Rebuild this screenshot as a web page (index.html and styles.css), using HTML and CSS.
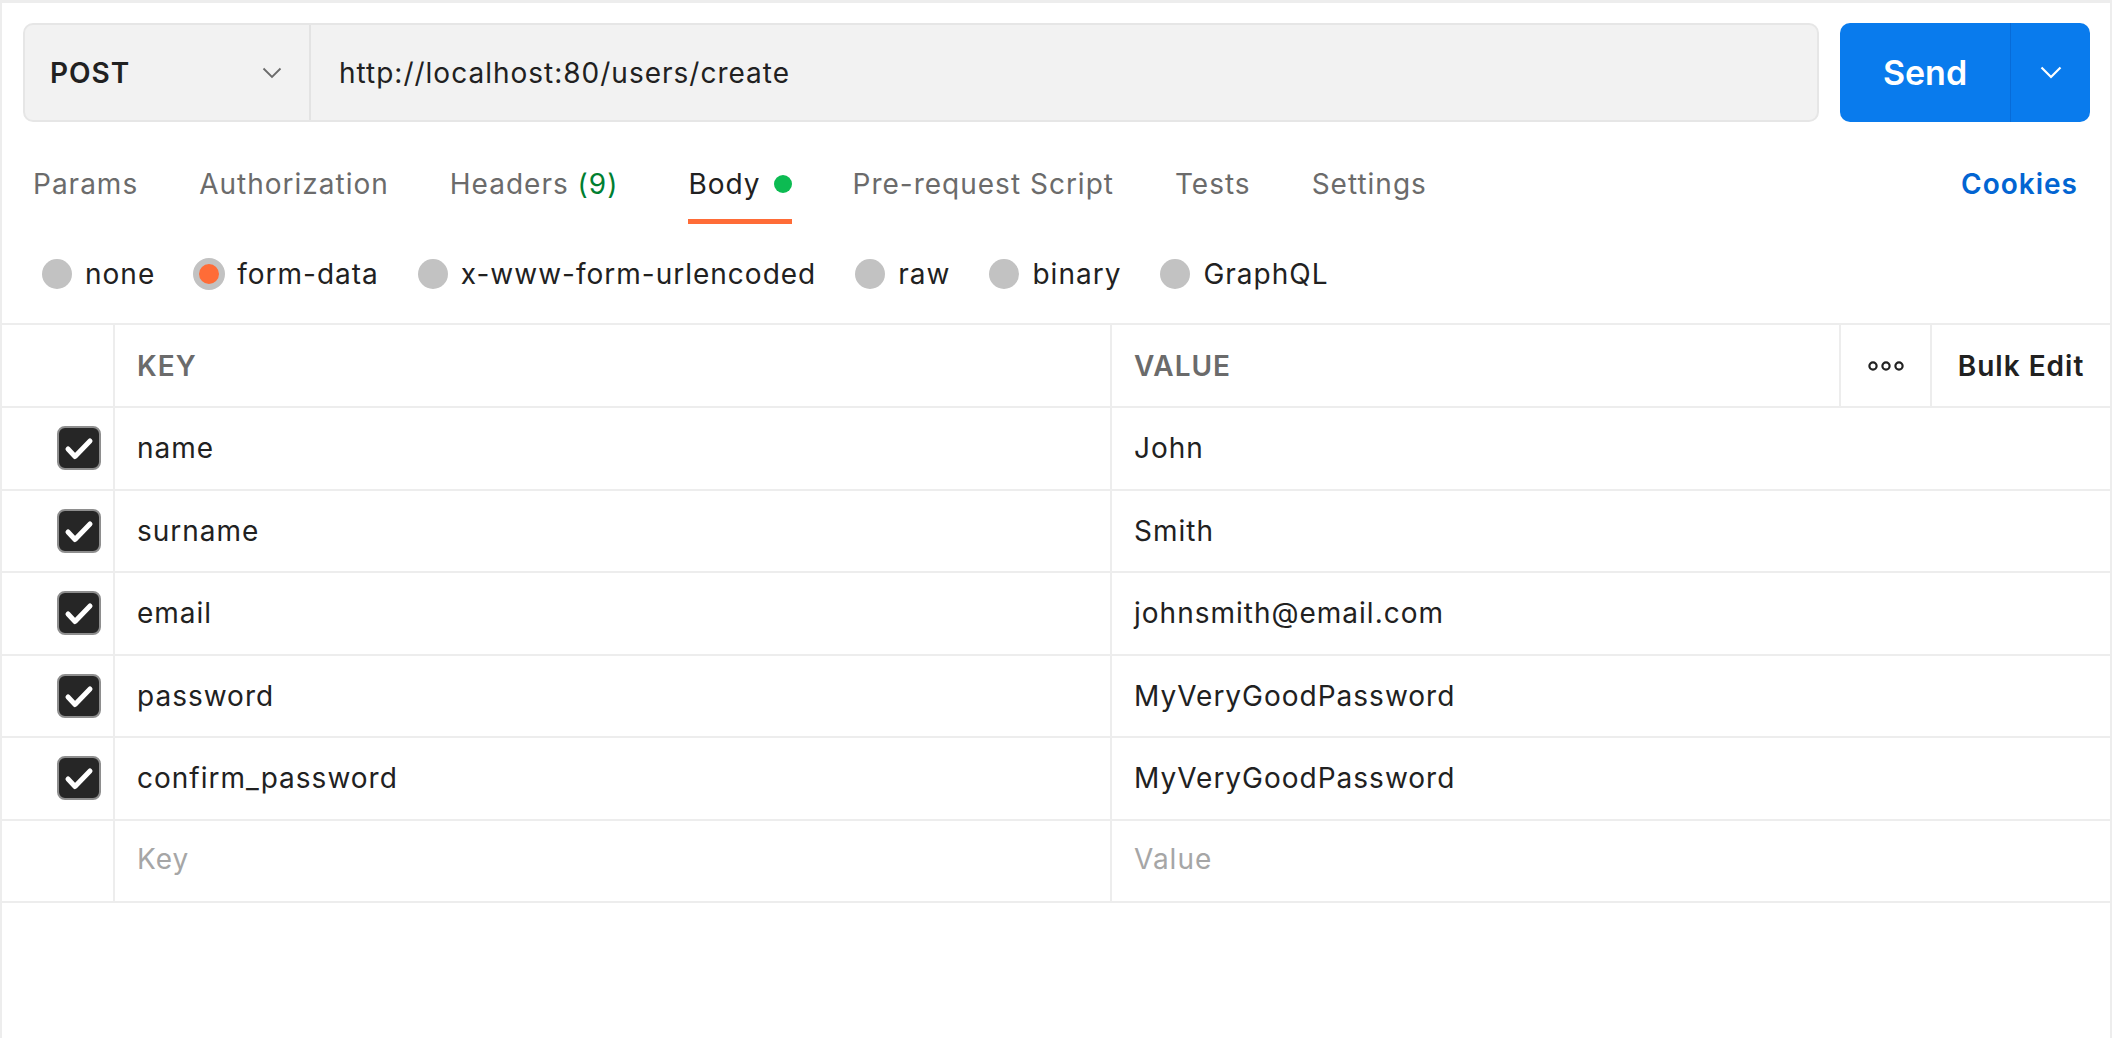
FILE: index.html
```html
<!DOCTYPE html>
<html lang="en">
<head>
<meta charset="utf-8">
<title>POST http://localhost:80/users/create</title>
<link rel="stylesheet" href="styles.css">
</head>
<body>
<div class="panel">
  <div class="request-bar">
    <div class="url-box">
      <div class="method">
        <span>POST</span>
        <svg class="chev" width="20" height="12" viewBox="0 0 20 12"><path d="M1.5 1.5 L10 10 L18.5 1.5" fill="none" stroke="#6b6b6b" stroke-width="1.8"/></svg>
      </div>
      <div class="url">http://localhost:80/users/create</div>
    </div>
    <div class="send">
      <span class="send-label">Send</span>
      <span class="send-more"><svg width="22" height="13" viewBox="0 0 22 13"><path d="M1.5 1.5 L11 11 L20.5 1.5" fill="none" stroke="#fff" stroke-width="2.2"/></svg></span>
    </div>
  </div>

  <div class="tabs">
    <div class="tab-list">
      <span class="tab">Params</span>
      <span class="tab">Authorization</span>
      <span class="tab">Headers <span class="count">(9)</span></span>
      <span class="tab active">Body<span class="dot"></span></span>
      <span class="tab">Pre-request Script</span>
      <span class="tab">Tests</span>
      <span class="tab">Settings</span>
    </div>
    <span class="cookies">Cookies</span>
  </div>

  <div class="body-types">
    <label class="radio"><span class="radio-dot"></span>none</label>
    <label class="radio"><span class="radio-dot on"></span>form-data</label>
    <label class="radio"><span class="radio-dot"></span>x-www-form-urlencoded</label>
    <label class="radio"><span class="radio-dot"></span>raw</label>
    <label class="radio"><span class="radio-dot"></span>binary</label>
    <label class="radio"><span class="radio-dot"></span>GraphQL</label>
  </div>

  <div class="kv-table">
    <div class="kv-row kv-head">
      <div class="cell check-cell"></div>
      <div class="cell head">KEY</div>
      <div class="cell head">VALUE</div>
      <div class="cell center"><svg width="36" height="10" viewBox="0 0 36 10"><circle cx="5" cy="5" r="3.6" fill="none" stroke="#212121" stroke-width="2.2"/><circle cx="18" cy="5" r="3.6" fill="none" stroke="#212121" stroke-width="2.2"/><circle cx="31" cy="5" r="3.6" fill="none" stroke="#212121" stroke-width="2.2"/></svg></div>
      <div class="cell center bulk">Bulk Edit</div>
    </div>
    <div class="kv-row">
      <div class="cell check-cell"><span class="checkbox"><svg width="40" height="40" viewBox="0 0 40 40"><path d="M9 21 L16 28.5 L31 13" fill="none" stroke="#fff" stroke-width="5" stroke-linecap="round" stroke-linejoin="round"/></svg></span></div>
      <div class="cell">name</div>
      <div class="cell">John</div>
    </div>
    <div class="kv-row">
      <div class="cell check-cell"><span class="checkbox"><svg width="40" height="40" viewBox="0 0 40 40"><path d="M9 21 L16 28.5 L31 13" fill="none" stroke="#fff" stroke-width="5" stroke-linecap="round" stroke-linejoin="round"/></svg></span></div>
      <div class="cell">surname</div>
      <div class="cell">Smith</div>
    </div>
    <div class="kv-row">
      <div class="cell check-cell"><span class="checkbox"><svg width="40" height="40" viewBox="0 0 40 40"><path d="M9 21 L16 28.5 L31 13" fill="none" stroke="#fff" stroke-width="5" stroke-linecap="round" stroke-linejoin="round"/></svg></span></div>
      <div class="cell">email</div>
      <div class="cell">johnsmith@email.com</div>
    </div>
    <div class="kv-row">
      <div class="cell check-cell"><span class="checkbox"><svg width="40" height="40" viewBox="0 0 40 40"><path d="M9 21 L16 28.5 L31 13" fill="none" stroke="#fff" stroke-width="5" stroke-linecap="round" stroke-linejoin="round"/></svg></span></div>
      <div class="cell">password</div>
      <div class="cell">MyVeryGoodPassword</div>
    </div>
    <div class="kv-row">
      <div class="cell check-cell"><span class="checkbox"><svg width="40" height="40" viewBox="0 0 40 40"><path d="M9 21 L16 28.5 L31 13" fill="none" stroke="#fff" stroke-width="5" stroke-linecap="round" stroke-linejoin="round"/></svg></span></div>
      <div class="cell">confirm_password</div>
      <div class="cell">MyVeryGoodPassword</div>
    </div>
    <div class="kv-row">
      <div class="cell check-cell"></div>
      <div class="cell placeholder">Key</div>
      <div class="cell placeholder">Value</div>
    </div>
  </div>
</div>
</body>
</html>
```

FILE: styles.css
```css
* { box-sizing: border-box; }

html, body {
  margin: 0;
  background: #ffffff;
}

body {
  font-family: Inter, "Noto Sans", "Liberation Sans", sans-serif;
  color: #212121;
  font-size: 28px;
  letter-spacing: 1px;
}

.panel {
  width: 2112px;
  height: 1038px;
  border-style: solid;
  border-color: #ededed;
  border-width: 3px 2px 0 2px;
  padding-top: 20px;
}

/* request bar */
.request-bar {
  display: flex;
  gap: 21px;
  height: 99px;
  padding: 0 20px 0 21px;
}

.url-box {
  flex: 1;
  display: flex;
  background: #f2f2f2;
  border: 2px solid #e6e6e6;
  border-radius: 10px;
}

.method {
  width: 286px;
  display: flex;
  align-items: center;
  justify-content: space-between;
  padding: 0 27px 0 25px;
  border-right: 2px solid #e3e3e3;
  font-weight: 600;
}

.url {
  display: flex;
  align-items: center;
  padding-left: 28px;
}

.send {
  width: 250px;
  display: flex;
  background: #097bed;
  border-radius: 10px;
  color: #ffffff;
}

.send-label {
  width: 170px;
  display: flex;
  align-items: center;
  justify-content: center;
  font-size: 34px;
  font-weight: 600;
  letter-spacing: 0;
}

.send-more {
  flex: 1;
  display: flex;
  align-items: center;
  justify-content: center;
  border-left: 1px solid rgba(0, 40, 120, 0.18);
}

/* tabs */
.tabs {
  display: flex;
  justify-content: space-between;
  align-items: flex-start;
  margin-top: 45px;
  padding: 0 32px 0 31px;
  line-height: 34px;
}

.tab-list {
  display: flex;
  gap: 61px;
}

.tab {
  display: flex;
  align-items: center;
  color: #6b6b6b;
  padding-bottom: 18px;
  border-bottom: 5px solid transparent;
  white-space: pre;
}

.tab.active {
  color: #212121;
  border-bottom-color: #ff6c37;
  margin-left: 9px;
}

.count { color: #007f31; }

.dot {
  width: 18px;
  height: 18px;
  border-radius: 50%;
  background: #0cbb52;
  margin-left: 13px;
}

.cookies {
  color: #0265d2;
  font-weight: 600;
}

/* body type radios */
.body-types {
  display: flex;
  gap: 39px;
  margin-top: 33px;
  padding-left: 40px;
  line-height: 34px;
}

.radio {
  display: flex;
  align-items: center;
  gap: 13px;
}

.radio-dot {
  width: 30px;
  height: 30px;
  border-radius: 50%;
  background: #c2c2c2;
}

.radio-dot.on {
  width: 32px;
  height: 32px;
  margin: 0 -1px;
  background: #ff6c37;
  border: 6.5px solid #c2c2c2;
}

/* key-value table */
.kv-table {
  margin-top: 32px;
  border-top: 2px solid #ededed;
}

.kv-row {
  display: grid;
  grid-template-columns: 111px 997px 1fr;
  height: 82.5px;
  border-bottom: 2px solid #ededed;
}

.kv-row.kv-head {
  grid-template-columns: 111px 997px 729px 91px 1fr;
  height: 83px;
}

.cell {
  display: flex;
  align-items: center;
  padding-left: 22px;
  border-left: 2px solid #ededed;
  white-space: nowrap;
}

.cell.check-cell {
  border-left: none;
  justify-content: flex-end;
  padding: 0 12px 0 0;
}

.cell.head {
  color: #6b6b6b;
  font-weight: 600;
}

.cell.center {
  justify-content: center;
  padding: 0;
}

.cell.bulk { font-weight: 600; }

.cell.placeholder {
  color: #a6a6a6;
  padding-bottom: 3px;
}

.checkbox {
  width: 44px;
  height: 44px;
  border-radius: 8px;
  background: #262626;
  border: 2px solid #8e8e8e;
  display: flex;
}
```
